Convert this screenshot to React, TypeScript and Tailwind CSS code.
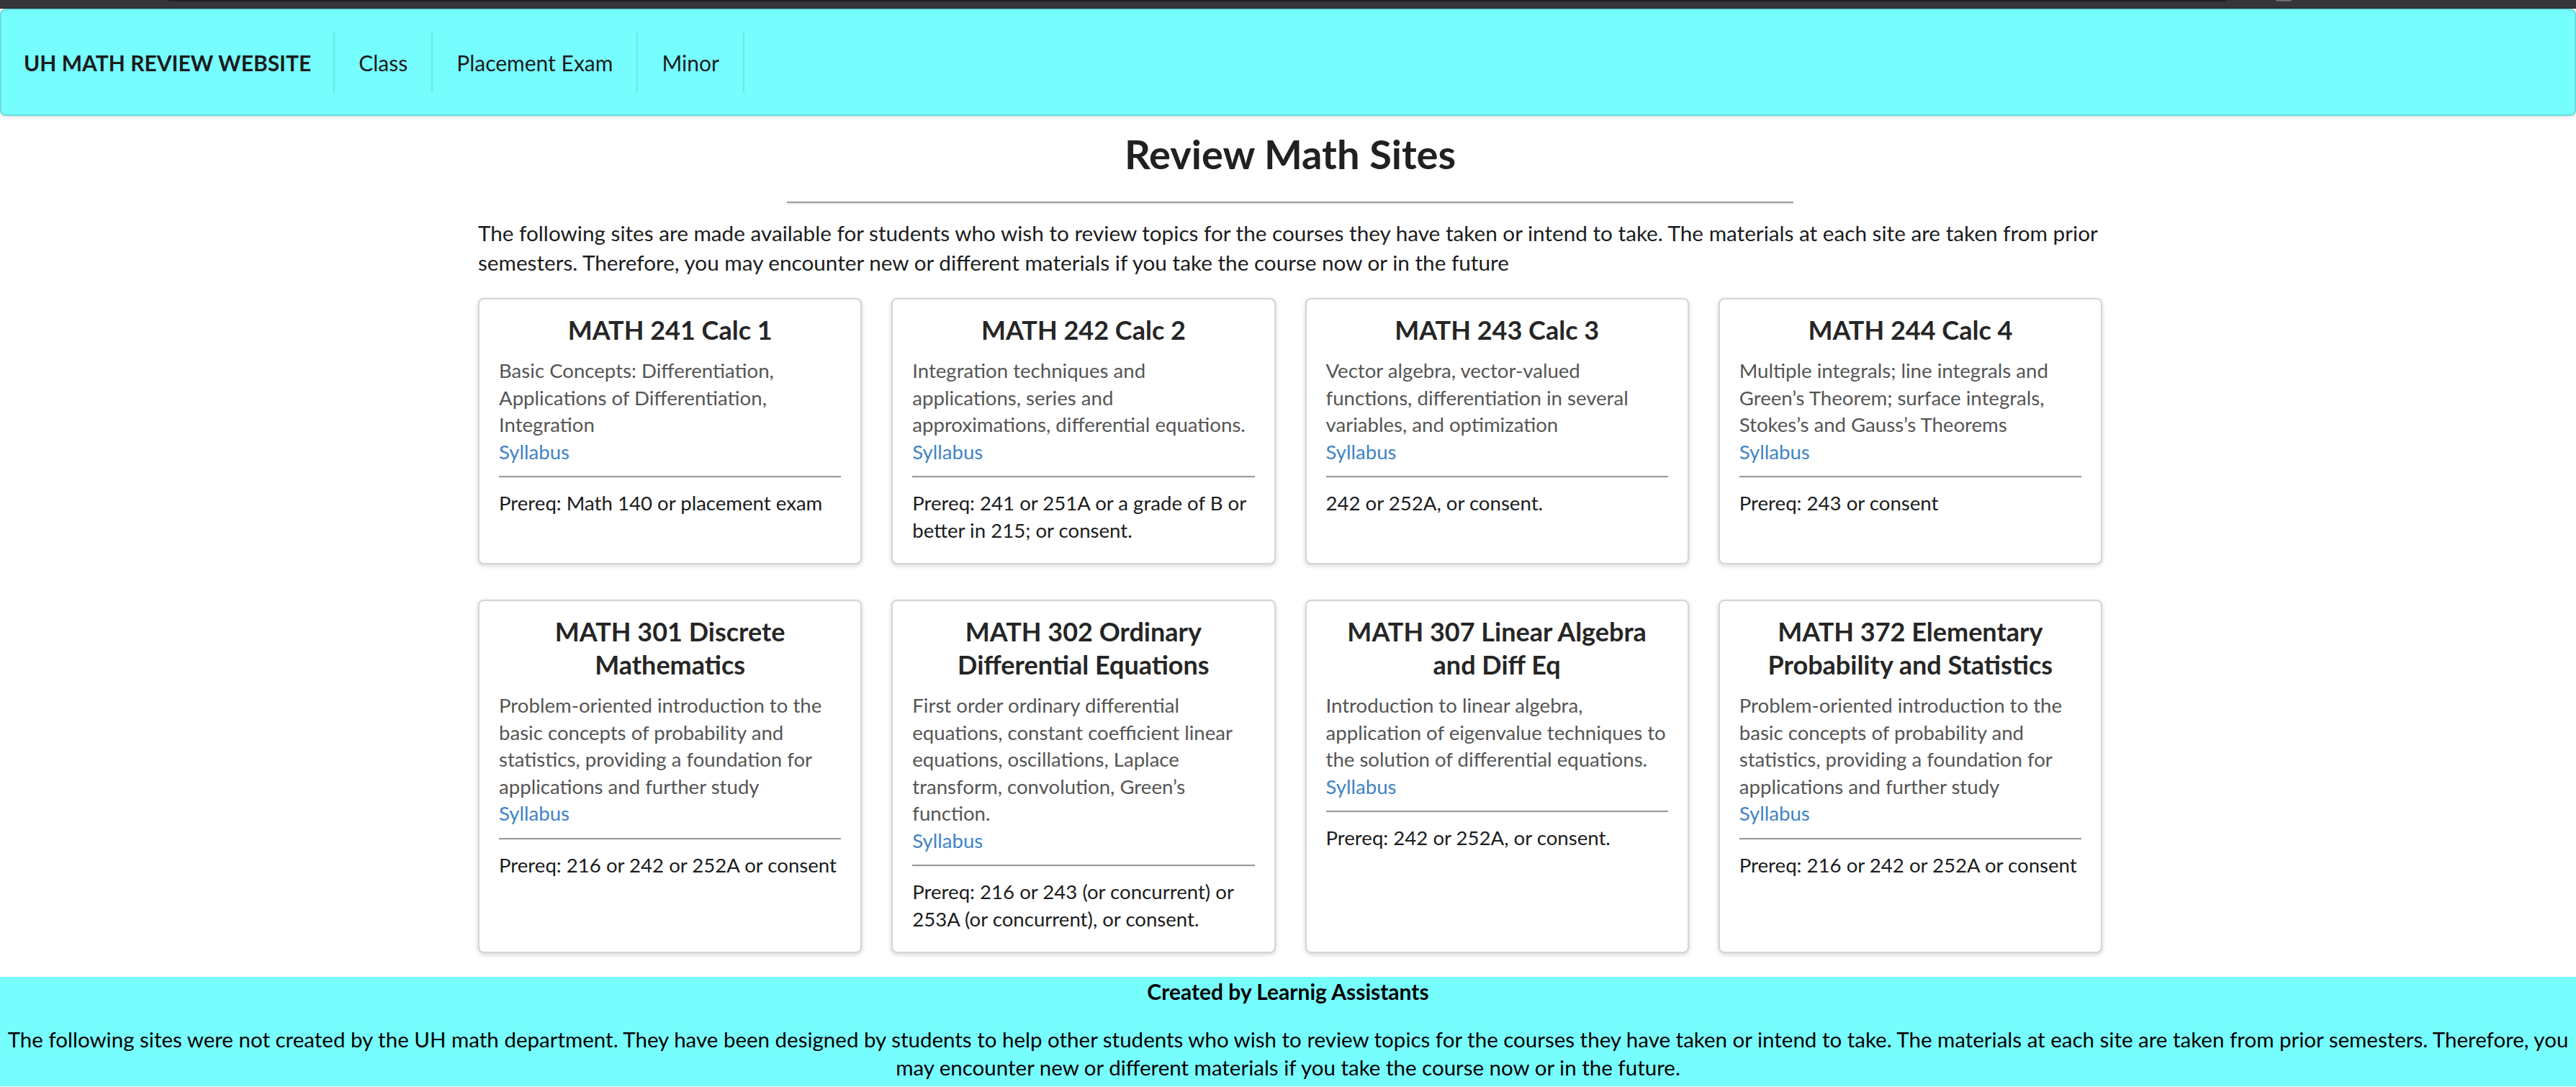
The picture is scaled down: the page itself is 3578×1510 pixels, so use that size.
import React from "react";

type Course = {
  title: string;
  desc: string;
  prereq: string;
};

const courses: Course[] = [
  {
    title: "MATH 241 Calc 1",
    desc: "Basic Concepts: Differentiation, Applications of Differentiation, Integration",
    prereq: "Prereq: Math 140 or placement exam",
  },
  {
    title: "MATH 242 Calc 2",
    desc: "Integration techniques and applications, series and approximations, differential equations.",
    prereq: "Prereq: 241 or 251A or a grade of B or better in 215; or consent.",
  },
  {
    title: "MATH 243 Calc 3",
    desc: "Vector algebra, vector-valued functions, differentiation in several variables, and optimization",
    prereq: "242 or 252A, or consent.",
  },
  {
    title: "MATH 244 Calc 4",
    desc: "Multiple integrals; line integrals and Green\u2019s Theorem; surface integrals, Stokes\u2019s and Gauss\u2019s Theorems",
    prereq: "Prereq: 243 or consent",
  },
  {
    title: "MATH 301 Discrete Mathematics",
    desc: "Problem-oriented introduction to the basic concepts of probability and statistics, providing a foundation for applications and further study",
    prereq: "Prereq: 216 or 242 or 252A or consent",
  },
  {
    title: "MATH 302 Ordinary Differential Equations",
    desc: "First order ordinary differential equations, constant coefficient linear equations, oscillations, Laplace transform, convolution, Green\u2019s function.",
    prereq: "Prereq: 216 or 243 (or concurrent) or 253A (or concurrent), or consent.",
  },
  {
    title: "MATH 307 Linear Algebra and Diff Eq",
    desc: "Introduction to linear algebra, application of eigenvalue techniques to the solution of differential equations.",
    prereq: "Prereq: 242 or 252A, or consent.",
  },
  {
    title: "MATH 372 Elementary Probability and Statistics",
    desc: "Problem-oriented introduction to the basic concepts of probability and statistics, providing a foundation for applications and further study",
    prereq: "Prereq: 216 or 242 or 252A or consent",
  },
];

function CourseCard({ c }: { c: Course }) {
  return (
    <div className="flex flex-col rounded-[8px] border-2 border-[#d4d4d5] bg-white px-[27px] pb-[27px] pt-[19px] shadow-[0_2px_6px_0_#d4d4d5]">
      <div className="text-center text-[36px] font-bold leading-[46px] text-[#262626]">
        {c.title}
      </div>
      <div className="mt-[15px] text-[27.6px] leading-[37.5px] text-[#555555]">
        <div>{c.desc}</div>
        <a href="#" className="block text-[#4183c4]">
          Syllabus
        </a>
      </div>
      <div className="mt-[15px] mb-[16px] border-t-2 border-b border-t-[#9a9a9a] border-b-[#eeeeee]" />
      <div className="text-[27.6px] leading-[37.5px] text-[#1b1c1d]">{c.prereq}</div>
    </div>
  );
}

export default function App() {
  const navItems = ["Class", "Placement Exam", "Minor"];
  return (
    <div className="h-[1510px] overflow-hidden bg-white font-[Lato,sans-serif] text-[#212121]">
      {/* top browser strip */}
      <div className="relative h-[12px] border-b border-[#1e1f22] bg-[#35363a]">
        <div className="absolute left-[233px] right-[486px] top-0 h-[2px] rounded-b-[4px] bg-[#202124]" />
        <div className="absolute left-[3161px] top-0 h-[2px] w-[22px] rounded-b-full bg-[#6b6c70]" />
      </div>

      {/* navbar */}
      <nav className="flex rounded-[8px] border-2 border-[#69dcdd] bg-[#76fdfe] py-[30px] shadow-[0_2px_4px_0_rgba(34,36,38,0.12)]">
        <div className="flex h-[85px] items-center border-r-2 border-[#6ee7e8] px-[31px] text-[30px] font-bold leading-none text-[#1b1c1d]">
          UH MATH REVIEW WEBSITE
        </div>
        {navItems.map((t) => (
          <div
            key={t}
            className="flex h-[85px] items-center border-r-2 border-[#6ee7e8] px-[33px] text-[30px] leading-none text-[#1b1c1d]"
          >
            {t}
          </div>
        ))}
      </nav>

      {/* main */}
      <main className="ml-[664px] w-[2256px]">
        <h1 className="mt-[17px] text-center text-[56px] font-bold leading-[72px] text-[#212121]">
          Review Math Sites
        </h1>
        <div className="mx-auto mt-[30px] w-[1398px] border-t-2 border-b-2 border-t-[#9a9a9a] border-b-[#efefef]" />
        <p className="mt-[19px] text-[29.7px] leading-[41px] text-[#1b1c1d]">
          The following sites are made available for students who wish to review topics for the courses they have
          taken or intend to take. The materials at each site are taken from prior semesters. Therefore, you may
          encounter new or different materials if you take the course now or in the future
        </p>
        <div className="mt-[29px] grid grid-cols-4 gap-x-[41px] gap-y-[49px]">
          {courses.map((c) => (
            <CourseCard key={c.title} c={c} />
          ))}
        </div>
      </main>

      {/* footer */}
      <footer className="mt-[33px] bg-[#76fdfe] pb-[7px] text-center text-[#000000]">
        <div className="text-[30px] font-bold leading-[40px]">Created by Learnig Assistants</div>
        <p className="mt-[27px] text-[29.5px] leading-[39px]">
          The following sites were not created by the UH math department. They have been designed by students to
          help other students who wish to review topics for the courses they have taken or intend to take. The
          materials at each site are taken from prior semesters. Therefore, you
          <br />
          may encounter new or different materials if you take the course now or in the future.
        </p>
      </footer>
    </div>
  );
}
